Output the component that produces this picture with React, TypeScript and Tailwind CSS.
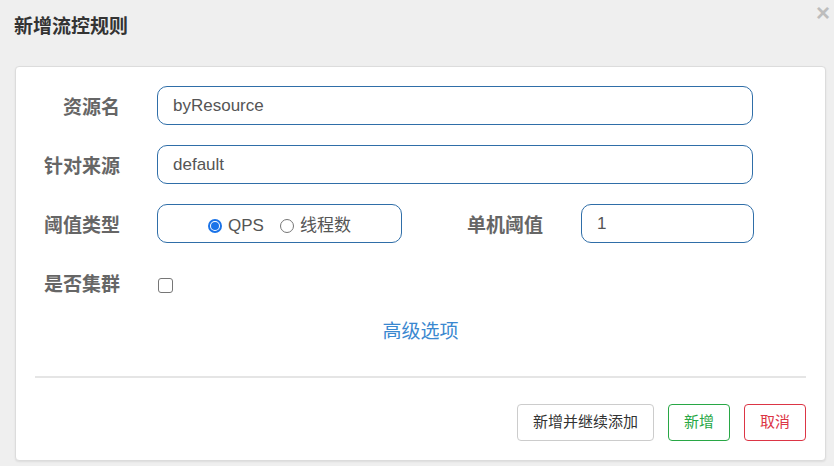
import React from 'react';

const font = "font-['Liberation_Sans','Noto_Sans_CJK_SC',sans-serif]";

function Label({ text, width }: { text: string; width: string }) {
  return (
    <div className={`${width} shrink-0 pt-[6px] text-right text-[19px] font-bold text-[#666]`}>
      {text}
    </div>
  );
}

function TextInput({ value, width }: { value: string; width: string }) {
  return (
    <div className={`${width} h-[39px] border border-[#2f6ea8] rounded-[10px] flex items-center px-[15px] text-[17px] text-[#555] bg-white`}>
      {value}
    </div>
  );
}

function Radio({ checked, label }: { checked: boolean; label: string }) {
  return (
    <div className="flex items-center gap-[6px]">
      {checked ? (
        <span className="w-[14px] h-[14px] rounded-full border-[2px] border-[#1a73e8] flex items-center justify-center">
          <span className="w-[8px] h-[8px] rounded-full bg-[#1a73e8]" />
        </span>
      ) : (
        <span className="w-[14px] h-[14px] rounded-full border border-[#767676] bg-white" />
      )}
      <span className="text-[17px] text-[#555]">{label}</span>
    </div>
  );
}

export default function App() {
  const [cluster, setCluster] = React.useState(false);

  return (
    <div className={`${font} w-[834px] h-[466px] bg-[#efefef] relative flex flex-col`}>
      <button className="absolute right-[4px] top-[1px] text-[24px] leading-none font-bold text-[#bdbdbd] bg-transparent border-none">
        ×
      </button>
      <div className="h-[56px] pl-[14px] pt-[13px] text-[19px] font-bold text-[#333]">
        新增流控规则
      </div>
      <div className="mx-[15px] mt-[10px] w-[811px] h-[395px] bg-white border border-[#dcdcdc] rounded-[4px] shadow-[0_1px_2px_rgba(0,0,0,0.08)] flex flex-col">
        <div className="flex flex-col gap-[20px] pt-[19px]">
          <div className="flex items-center gap-[37px]">
            <Label text="资源名" width="w-[104px]" />
            <TextInput value="byResource" width="w-[596px]" />
          </div>
          <div className="flex items-center gap-[37px]">
            <Label text="针对来源" width="w-[104px]" />
            <TextInput value="default" width="w-[596px]" />
          </div>
          <div className="flex items-center">
            <Label text="阈值类型" width="w-[104px]" />
            <div className="ml-[37px] w-[245px] h-[39px] pt-[5px] border border-[#2f6ea8] rounded-[10px] flex items-center justify-center gap-[16px]">
              <Radio checked label="QPS" />
              <Radio checked={false} label="线程数" />
            </div>
            <Label text="单机阈值" width="w-[141px]" />
            <div className="ml-[38px]">
              <TextInput value="1" width="w-[173px]" />
            </div>
          </div>
          <div className="flex items-center gap-[38px] h-[39px]">
            <Label text="是否集群" width="w-[104px]" />
            <button
              onClick={() => setCluster(!cluster)}
              className="mt-[5px] w-[15px] h-[15px] border border-[#767676] rounded-[3px] bg-white"
            />
          </div>
        </div>
        <div className="flex justify-center pt-[16px]">
          <a className="text-[19px] text-[#3a88d0] cursor-pointer">高级选项</a>
        </div>
        <div className="mx-[19px] mt-[29px] h-[2px] bg-[#e5e5e5]" />
        <div className="flex justify-end gap-[14px] px-[19px] pt-[26px]">
          <button className="h-[37px] px-[15px] border border-[#ccc] rounded-[4px] bg-white text-[15px] text-[#333]">
            新增并继续添加
          </button>
          <button className="h-[37px] px-[15px] border border-[#28a745] rounded-[4px] bg-white text-[15px] text-[#28a745]">
            新增
          </button>
          <button className="h-[37px] px-[15px] border border-[#dc3545] rounded-[4px] bg-white text-[15px] text-[#dc3545]">
            取消
          </button>
        </div>
      </div>
    </div>
  );
}
